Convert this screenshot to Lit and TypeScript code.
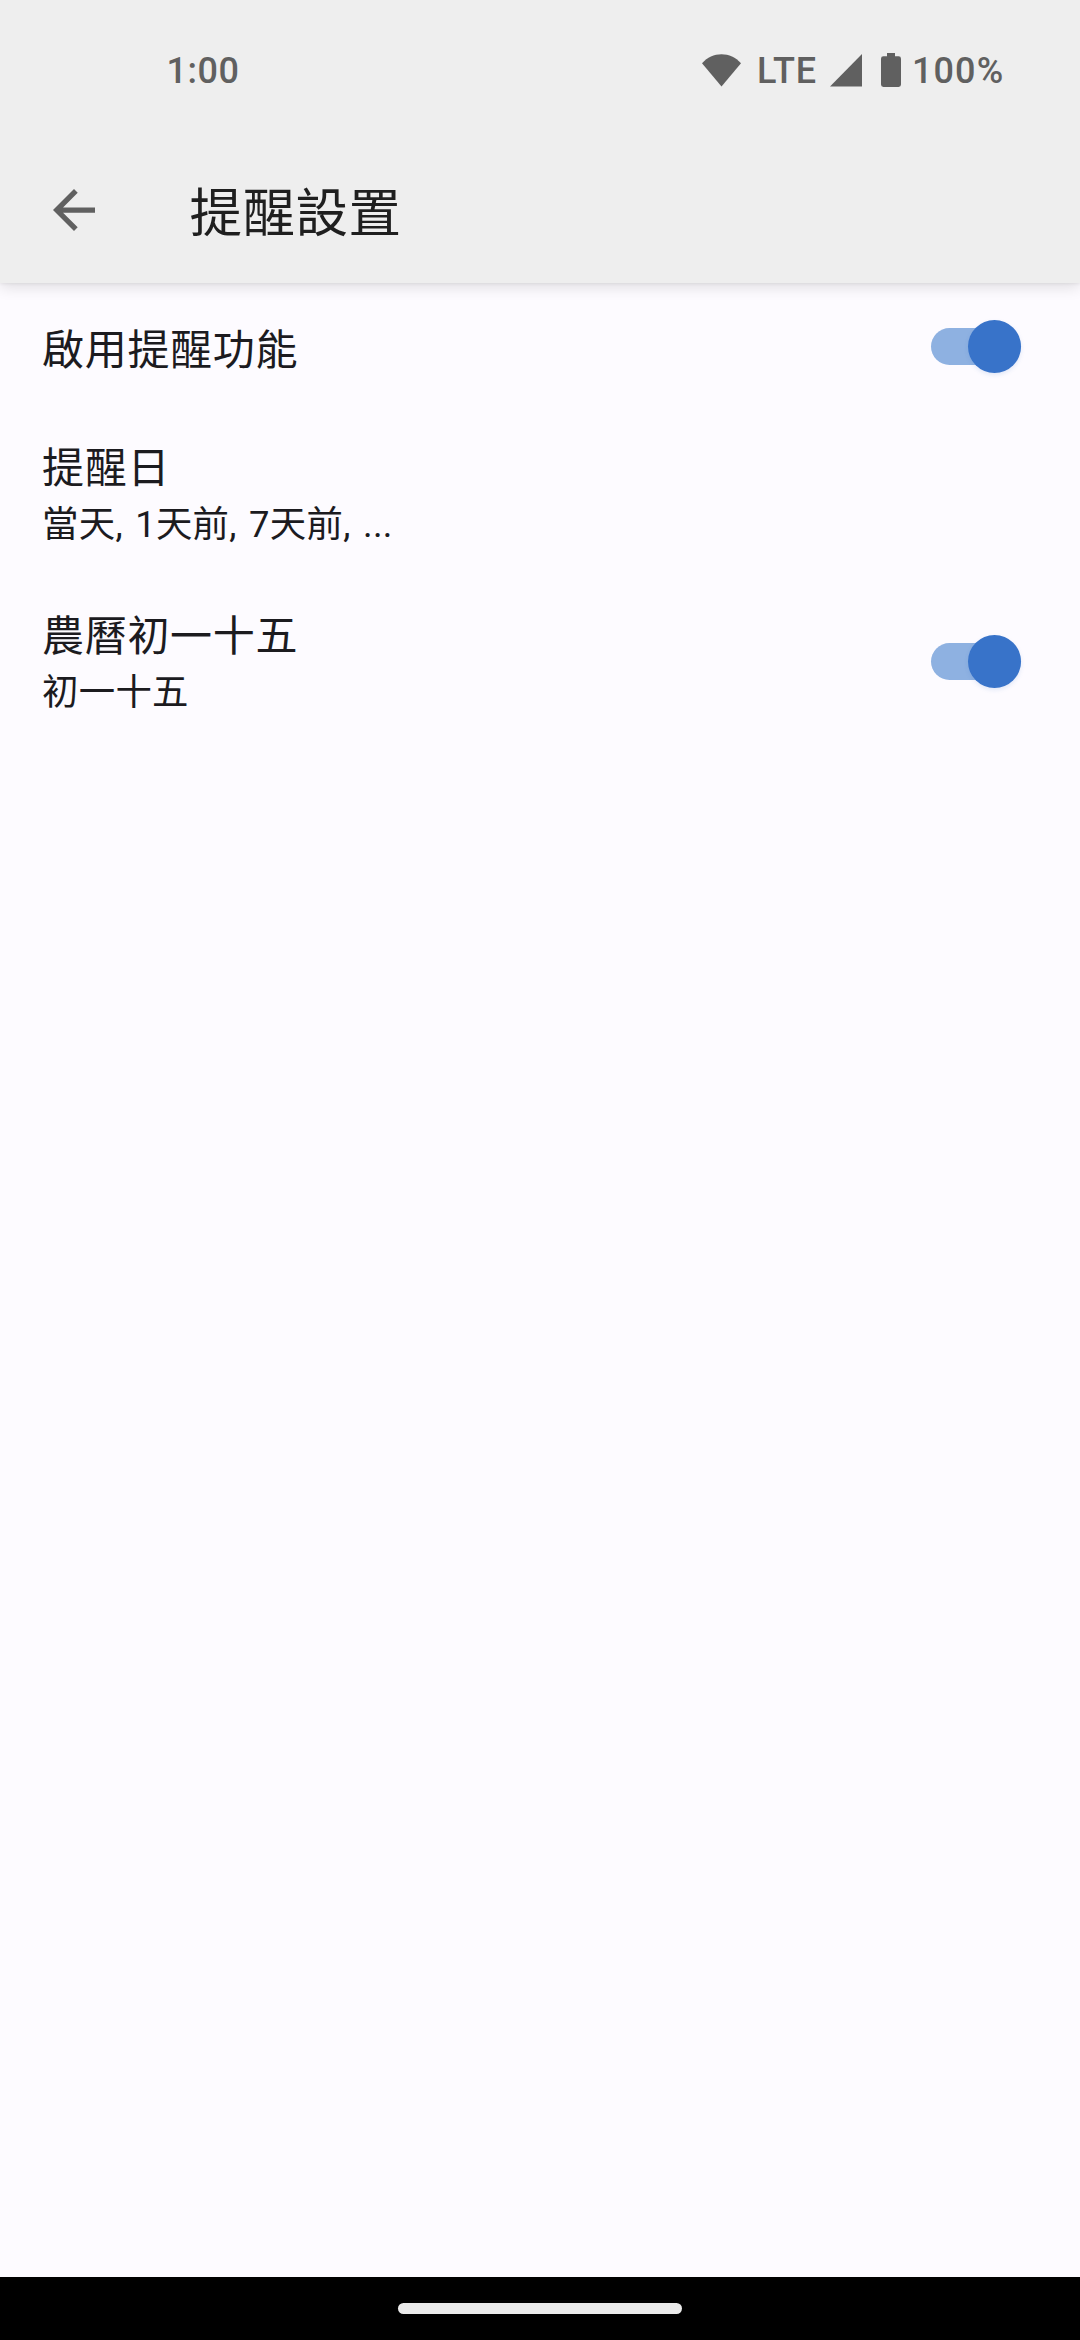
import { LitElement, html, css, nothing } from "lit";
import { customElement, property } from "lit/decorators.js";

@customElement("status-bar")
class StatusBar extends LitElement {
  static styles = css`
    :host {
      display: flex;
      align-items: center;
      justify-content: space-between;
      height: 140px;
      padding: 0 75px 0 166.5px;
      box-sizing: border-box;
      color: #606060;
      font: 500 36px/42px Roboto, sans-serif;
    }
    .time,
    .network,
    .level {
      padding-top: 2px;
      white-space: nowrap;
    }
    .time {
      letter-spacing: 0.5px;
    }
    .icons {
      display: flex;
      align-items: center;
    }
    .icons svg {
      display: block;
      flex: none;
      fill: #606060;
    }
    .wifi {
      margin-right: 16px;
    }
    .network {
      width: 61px;
      letter-spacing: 0.9px;
    }
    .signal {
      margin: 0 19px 0 12px;
    }
    .battery {
      margin-right: 11px;
    }
    .level {
      width: 93px;
      letter-spacing: 1.1px;
    }
  `;
  render() {
    return html`
      <span class="time">1:00</span>
      <div class="icons">
        <svg class="wifi" width="39" height="33" viewBox="0 0 39 33">
          <path d="M0 9.2C5.4 3.3 12 .2 19.5 .2S33.6 3.3 39 9.2L19.5 32.6Z" />
        </svg>
        <span class="network">LTE</span>
        <svg class="signal" width="32" height="33" viewBox="0 0 32 33">
          <path d="M32 0V32.5H0Z" />
        </svg>
        <svg class="battery" width="20" height="34" viewBox="0 0 20 34">
          <path d="M6 0h8v3.300h3.600q2.400 0 2.400 2.400v25.900q0 2.400-2.400 2.400H2.400Q0 34 0 31.600V5.700q0-2.400 2.400-2.400H6Z" />
        </svg>
        <span class="level">100%</span>
      </div>
    `;
  }
}

@customElement("app-toolbar")
class AppToolbar extends LitElement {
  @property() heading = "";
  static styles = css`
    :host {
      display: flex;
      align-items: center;
      height: 143px;
      padding-left: 53px;
      box-sizing: border-box;
    }
    .back {
      display: block;
      margin: 0 94.5px 4px 0;
    }
    .title {
      margin: 0;
      padding-top: 4px;
      font: 400 52.5px/76px Roboto, "Noto Sans CJK TC", sans-serif;
      letter-spacing: 0.5px;
      color: #1f1f1f;
    }
  `;
  render() {
    return html`
      <svg class="back" width="42" height="42" viewBox="4 4 16 16" fill="#606060">
        <path d="M20 11H7.830l5.590-5.590L12 4l-8 8 8 8 1.410-1.410L7.830 13H20v-2z" />
      </svg>
      <h1 class="title">${this.heading}</h1>
    `;
  }
}

@customElement("toggle-switch")
class ToggleSwitch extends LitElement {
  static styles = css`
    :host {
      display: flex;
      align-items: center;
      justify-content: flex-end;
      width: 90px;
      height: 37px;
      border-radius: 19px;
      background: #8eb1e1;
    }
    .thumb {
      flex: none;
      width: 53px;
      height: 53px;
      border-radius: 50%;
      background: #3873c9;
      box-shadow: 0 2px 4px rgba(56, 115, 201, 0.14);
    }
  `;
  render() {
    return html`<div class="thumb"></div>`;
  }
}

@customElement("preference-row")
class PreferenceRow extends LitElement {
  @property() label = "";
  @property() summary = "";
  @property({ type: Boolean }) toggle = false;
  static styles = css`
    :host {
      display: flex;
      align-items: center;
      justify-content: space-between;
      height: 168px;
      padding: 0 59px 0 42px;
      box-sizing: border-box;
      color: #1c1b1f;
      font-family: Roboto, "Noto Sans CJK TC", sans-serif;
    }
    :host(.single) {
      height: 126px;
    }
    :host(.single) .text {
      padding-top: 8px;
    }
    .label {
      font-size: 42px;
      line-height: 62px;
      letter-spacing: 0.7px;
    }
    .summary {
      font-size: 36.4px;
      line-height: 50px;
      letter-spacing: 0.3px;
      word-spacing: 3px;
    }
  `;
  render() {
    return html`
      <div class="text">
        <div class="label">${this.label}</div>
        ${this.summary ? html`<div class="summary">${this.summary}</div>` : nothing}
      </div>
      ${this.toggle ? html`<toggle-switch></toggle-switch>` : nothing}
    `;
  }
}

@customElement("app-root")
class AppRoot extends LitElement {
  static styles = css`
    :host {
      display: flex;
      flex-direction: column;
      width: 1080px;
      height: 2340px;
      background: #fdfbff;
    }
    .header {
      background: #eeeeee;
      box-shadow: 0 4px 14px rgba(0, 0, 0, 0.12), 0 1px 3px rgba(0, 0, 0, 0.06);
    }
    .content {
      flex: 1;
      padding-top: 0.5px;
    }
    .nav {
      display: flex;
      justify-content: center;
      height: 63px;
      padding-top: 26px;
      box-sizing: border-box;
      background: #000;
    }
    .handle {
      width: 284px;
      height: 11px;
      border-radius: 6px;
      background: #ebebeb;
    }
  `;
  render() {
    return html`
      <header class="header">
        <status-bar></status-bar>
        <app-toolbar heading="提醒設置"></app-toolbar>
      </header>
      <main class="content">
        <preference-row class="single" label="啟用提醒功能" toggle></preference-row>
        <preference-row label="提醒日" summary="當天, 1天前, 7天前, ..."></preference-row>
        <preference-row label="農曆初一十五" summary="初一十五" toggle></preference-row>
      </main>
      <footer class="nav"><div class="handle"></div></footer>
    `;
  }
}
